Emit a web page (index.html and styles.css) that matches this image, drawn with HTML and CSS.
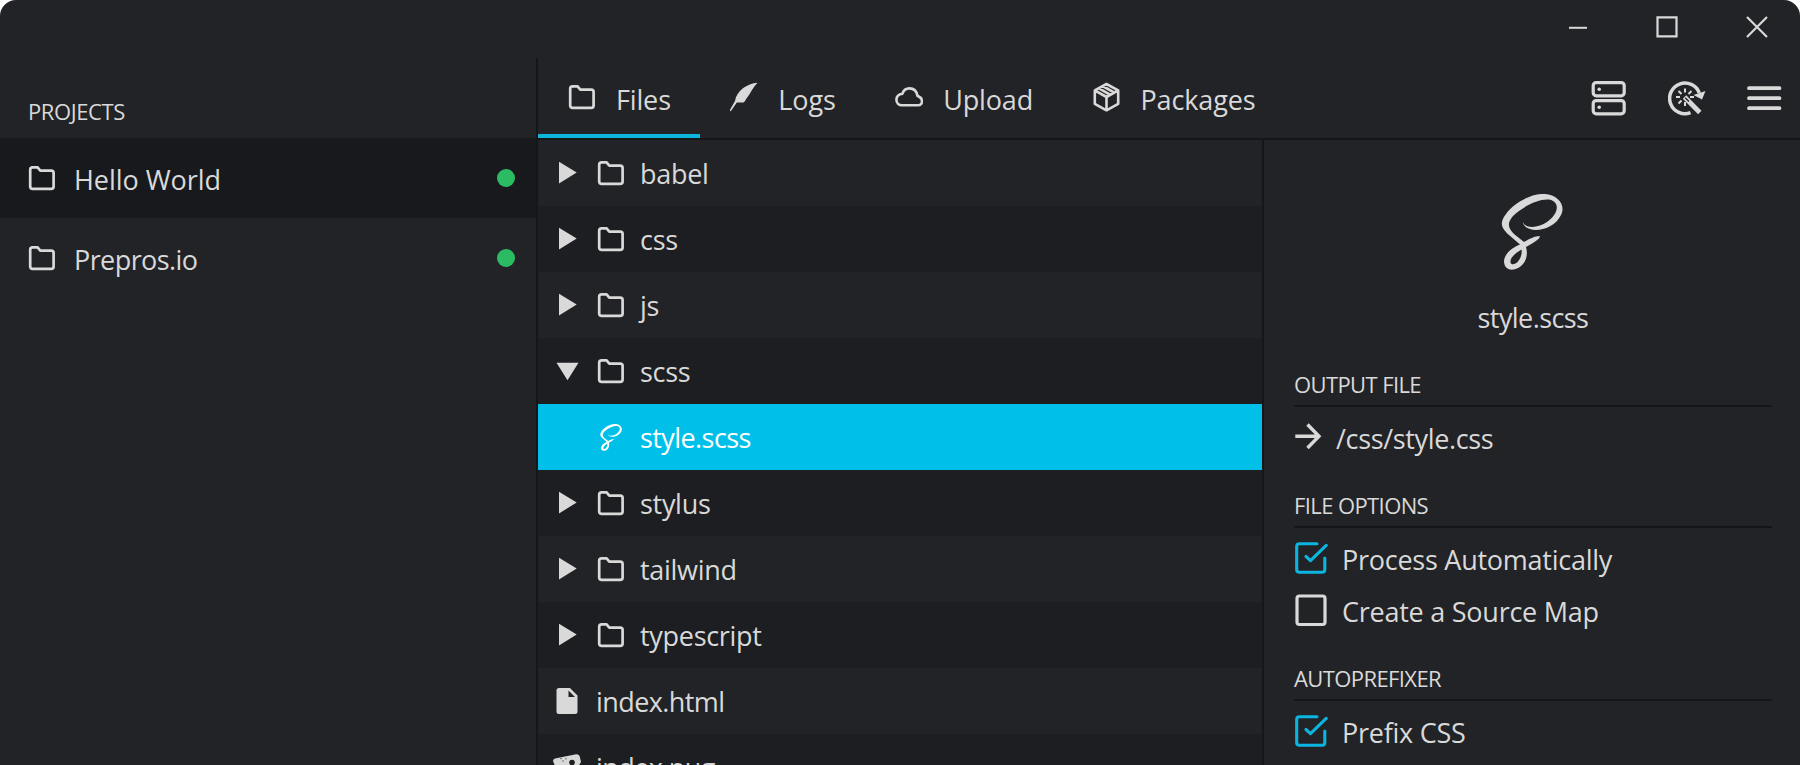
FILE: index.html
```html
<!DOCTYPE html>
<html lang="en">
<head>
<meta charset="utf-8">
<title>Prepros</title>
<link rel="stylesheet" href="styles.css">
</head>
<body>
<svg class="defs" width="0" height="0" aria-hidden="true">
  <symbol id="folder" viewBox="0 0 28 26"><path d="M4.6 2.4H9.6L12.3 5.6H23.2Q25.6 5.6 25.6 8V21.400Q25.6 23.8 23.2 23.8H4.6Q2.2 23.8 2.2 21.400V4.800Q2.2 2.400 4.6 2.400Z" fill="none" stroke="currentColor" stroke-width="2.7" stroke-linejoin="round"/></symbol>
  <symbol id="right" viewBox="0 0 24 24"><path d="M4 .8V22.400L21.700 11.600Z" fill="currentColor"/></symbol>
  <symbol id="down" viewBox="0 0 24 24"><path d="M1.500 3.800H23.500L12.500 21.200Z" fill="currentColor"/></symbol>
  <symbol id="sass" viewBox="0 0 62 76"><path fill="currentColor" fill-rule="evenodd" d="M22 28C24 35 38 34 46 28C56 21 59 11 52 7C44 2 23 11 12 22C5 30 8 35 13 40L23 48C28 45 34 42 39 42L38 44.500C34 48 29 51 25 53C28 63 23 73 14 75.200C7 77 3 73 3 67C4 58 13 53 19 50.500L8 41C-1 33-1 28 5 20C14 7 33-1 44 0C57 1 65 11 60 21C54 34 37 38 29 35C25 34 22 31 22 28ZM20.500 55.500C13 60 9 64 9.500 68.500C10 71 14 71 17 67.500C20 64 21.200 59 20.500 55.500Z"/></symbol>
  <symbol id="checked" viewBox="0 0 34 34"><g fill="none" stroke="currentColor" stroke-width="3.100" stroke-linecap="round" stroke-linejoin="round"><path d="M23 2.700H5.500Q2.700 2.700 2.700 5.500V28.500Q2.700 31.300 5.500 31.300H28Q30.800 31.300 30.800 28.500V17"/><path d="M12 15.500L16.500 19.700L32.200 4.300"/></g></symbol>
</svg>
<div class="window">
  <header class="titlebar">
    <svg class="win-btn" viewBox="0 0 24 24"><path d="M4 12.800H22" stroke="currentColor" stroke-width="2"/></svg>
    <svg class="win-btn" viewBox="0 0 24 24"><path d="M2.500 2.300H21.500V21.300H2.500Z" fill="none" stroke="currentColor" stroke-width="2.200"/></svg>
    <svg class="win-btn" viewBox="0 0 24 24"><path d="M2 2L22 22M22 2L2 22" stroke="currentColor" stroke-width="2.200"/></svg>
  </header>
  <div class="body">
    <aside class="sidebar">
      <h2 class="heading side-heading">PROJECTS</h2>
      <div class="project active"><svg class="folder"><use href="#folder"/></svg><span>Hello World</span><i class="dot"></i></div>
      <div class="project"><svg class="folder"><use href="#folder"/></svg><span class="dotted">Prepros.io</span><i class="dot"></i></div>
    </aside>
    <main class="main">
      <nav class="tabs">
        <div class="tab selected"><svg class="folder"><use href="#folder"/></svg><span>Files</span></div>
        <div class="tab"><svg class="tab-icon" viewBox="0 0 28 30"><path d="M27.500 .8C17 1.500 6.500 9 5 19L-.5 28.500L.8 29.300L6.800 20.600H13.500C14.800 19.500 15.600 18 16.500 16.500C21 11 23 5 27.500 .8Z" fill="currentColor"/></svg><span>Logs</span></div>
        <div class="tab"><svg class="tab-icon" viewBox="0 0 28 30"><path d="M7 23.300H23.200C25.500 23.300 27 21.500 27 19.300C27 17 25.700 15.200 22.500 13.800C21.500 9 18.500 6.400 14.500 6.400C10.800 6.400 8.400 8.700 7.400 11.700C3.500 12.300 1.400 14.800 1.400 17.800C1.400 21 3.800 23.300 7 23.300Z" fill="none" stroke="currentColor" stroke-width="2.600"/></svg><span>Upload</span></div>
        <div class="tab"><svg class="tab-icon" viewBox="0 0 28 30"><g fill="none" stroke="currentColor" stroke-width="2.600" stroke-linejoin="round"><path d="M13.500 2L25.200 8.300V21.800L13.500 28.300L1.800 21.800V8.300ZM1.800 8.300L13.500 15L25.200 8.300M13.500 15V28.300M5.600 6.200L17.300 12.900M9.600 4L21.300 10.600"/></g></svg><span>Packages</span></div>
        <div class="tools">
          <svg viewBox="0 0 38 36"><g fill="none" stroke="currentColor" stroke-width="3.200"><rect x="2.200" y="2.600" width="31" height="13.200" rx="3"/><rect x="2.200" y="20.600" width="31" height="13.200" rx="3"/></g><circle cx="8.200" cy="9.300" r="1.800" fill="currentColor"/><circle cx="8.200" cy="27.300" r="1.800" fill="currentColor"/></svg>
          <svg viewBox="0 0 38 36"><path d="M31.300 13A15.300 15.300 0 1 0 22.500 32.600" fill="none" stroke="currentColor" stroke-width="3.500"/><path d="M25.500 15L37.500 11L34 19.500Z" fill="currentColor"/><path d="M16.500 17L31.800 32.500" stroke="currentColor" stroke-width="4.800"/><path d="M17.200 17.700L21 21.500" stroke="#222326" stroke-width="1.400"/><path d="M17 8.500V12.500M10.500 11L13.500 14M23.500 11L20.500 14M8 17H12M22 17H26M10.500 23.500L13.500 20.500M17 22V26" stroke="currentColor" stroke-width="2"/></svg>
          <svg viewBox="0 0 38 36"><path d="M4 8.200H34.500M4 18.200H34.500M4 28.200H34.500" stroke="currentColor" stroke-width="3.800" stroke-linecap="round"/></svg>
        </div>
      </nav>
      <div class="columns">
        <section class="files">
          <div class="row"><svg class="arrow"><use href="#right"/></svg><svg class="folder"><use href="#folder"/></svg><span>babel</span></div>
          <div class="row"><svg class="arrow"><use href="#right"/></svg><svg class="folder"><use href="#folder"/></svg><span>css</span></div>
          <div class="row"><svg class="arrow"><use href="#right"/></svg><svg class="folder"><use href="#folder"/></svg><span>js</span></div>
          <div class="row"><svg class="arrow"><use href="#down"/></svg><svg class="folder"><use href="#folder"/></svg><span>scss</span></div>
          <div class="row current"><i class="arrow"></i><svg class="sass-small"><use href="#sass"/></svg><span class="dotted">style.scss</span></div>
          <div class="row"><svg class="arrow"><use href="#right"/></svg><svg class="folder"><use href="#folder"/></svg><span>stylus</span></div>
          <div class="row"><svg class="arrow"><use href="#right"/></svg><svg class="folder"><use href="#folder"/></svg><span>tailwind</span></div>
          <div class="row"><svg class="arrow"><use href="#right"/></svg><svg class="folder"><use href="#folder"/></svg><span>typescript</span></div>
          <div class="row"><svg class="file" viewBox="0 0 28 28"><path d="M6 1H17L24.500 8.500V24.500Q24.500 27 22 27H6Q3.500 27 3.500 24.500V3.500Q3.500 1 6 1ZM15.500 3.500V10H22Z" fill="currentColor" fill-rule="evenodd"/></svg><span class="dotted">index.html</span></div>
          <div class="row"><svg class="file" viewBox="0 0 28 28"><path d="M0 8Q0 6 2 5.500L22 1.500Q26 .5 27 4.500L28 9L25 14L19 26H8L2 13Z" fill="currentColor"/><path d="M7 5.800L9 5.400M12 6L14 5.600M9 8.200L11 7.800" stroke="#77787a" stroke-width="1"/><circle cx="19" cy="9.500" r="2.800" fill="#1d1e21"/></svg><span class="dotted">index.pug</span></div>
        </section>
        <section class="details">
          <svg class="sass-large"><use href="#sass"/></svg>
          <div class="filename dotted">style.scss</div>
          <h2 class="heading section">OUTPUT FILE</h2>
          <div class="output"><svg class="to" viewBox="0 0 28 28"><path d="M1.300 14.300H25M13.500 2.500L25 14.300L13.500 26" fill="none" stroke="currentColor" stroke-width="3.400"/></svg><span>/css/style.css</span></div>
          <h2 class="heading section">FILE OPTIONS</h2>
          <div class="option"><svg class="check on"><use href="#checked"/></svg><span>Process Automatically</span></div>
          <div class="option"><svg class="check" viewBox="0 0 34 34"><rect x="3" y="3" width="28" height="28.500" rx="2.500" fill="none" stroke="currentColor" stroke-width="3.200"/></svg><span>Create a Source Map</span></div>
          <h2 class="heading section last">AUTOPREFIXER</h2>
          <div class="option"><svg class="check on"><use href="#checked"/></svg><span>Prefix CSS</span></div>
        </section>
      </div>
    </main>
  </div>
</div>
</body>
</html>
```
FILE: styles.css
```css
* { box-sizing: border-box; }
html { background: #fff; }
body {
  margin: 0;
  width: 1800px;
  height: 765px;
  overflow: hidden;
  font: 27px "Open Sans", "Noto Sans", sans-serif;
  color: #d9d9d9;
}
svg { display: block; flex: none; }
.defs { position: absolute; }
.window {
  height: 765px;
  display: flex;
  flex-direction: column;
  background: #222326;
  border-radius: 16px 16px 0 0;
  overflow: hidden;
}
.titlebar {
  flex: none;
  height: 58px;
  display: flex;
  justify-content: flex-end;
  gap: 66px;
  padding: 15px 31px 0 0;
}
.win-btn { width: 24px; height: 24px; }
.body { flex: 1; display: flex; min-height: 0; }
.heading { margin: 0; font-size: 22px; font-weight: 400; letter-spacing: -0.6px; }
.dotted { letter-spacing: -0.58px; }
.folder { width: 28px; height: 26px; }

.sidebar { width: 538px; border-right: 2px solid #151618; }
.side-heading { height: 80px; padding: 38px 0 0 28px; line-height: 31px; letter-spacing: -0.4px; }
.project { height: 80px; display: flex; align-items: center; gap: 18px; padding: 0 21px 0 28px; letter-spacing: -0.05px; }
.project span { padding-top: 2px; }
.project.active { background: #18191c; }
.dot { margin-left: auto; width: 18px; height: 18px; border-radius: 50%; background: #2bbc63; }

.main { flex: 1; display: flex; flex-direction: column; min-width: 0; }
.tabs { flex: none; height: 82px; display: flex; border-bottom: 2px solid #151618; }
.tab { display: flex; align-items: center; gap: 20px; padding: 5px 29.5px 0 30px; border-bottom: 4px solid transparent; letter-spacing: -0.15px; }
.tab svg { margin-bottom: 3px; }
.tab span { padding-top: 2px; }
.tab.selected { border-color: #0cb5d9; }
.tab-icon { width: 28px; height: 30px; }
.tools { margin-left: auto; display: flex; gap: 39px; padding: 22px 17px 0 0; }
.tools svg { width: 38px; height: 36px; }

.columns { flex: 1; display: flex; min-height: 0; }
.files { width: 726px; border-right: 2px solid #151618; overflow: hidden; }
.row { height: 66px; display: flex; align-items: center; padding: 0 0 0 17px; letter-spacing: -0.3px; }
.row:nth-child(even) { background: #1d1e21; }
.row span { padding-top: 1px; }
.row .folder { margin-right: 15px; }
.arrow { width: 24px; height: 24px; margin-right: 18px; }
.row.current { background: #00bfe8; color: #fff; }
.sass-small { width: 22px; height: 27px; margin: 0 18px 0 3px; }
.file { width: 28px; height: 28px; margin: 0 15px 0 -2px; }

.details { flex: 1; padding: 54px 28px 0 30px; }
.sass-large { width: 62px; height: 76px; margin: 0 auto 0 207px; }
.filename { text-align: center; line-height: 38px; margin-top: 29px; }
.section { height: 40px; line-height: 35px; border-bottom: 2px solid #151618; margin-top: 30px; }
.output { display: flex; align-items: center; height: 64px; gap: 14px; letter-spacing: -0.35px; }
.output svg { width: 28px; height: 28px; margin-bottom: 6px; }
.output span { margin-bottom: 1px; }
.output + .section { margin-top: 17px; }
.section.last { margin-top: 29px; line-height: 34px; }
.option { display: flex; height: 52px; align-items: center; gap: 14px; padding-top: 12px; letter-spacing: -0.25px; }
.option span { margin-bottom: 2px; }
.check { width: 34px; height: 34px; margin-bottom: 4px; }
.check.on { color: #0cb5e0; }
```
